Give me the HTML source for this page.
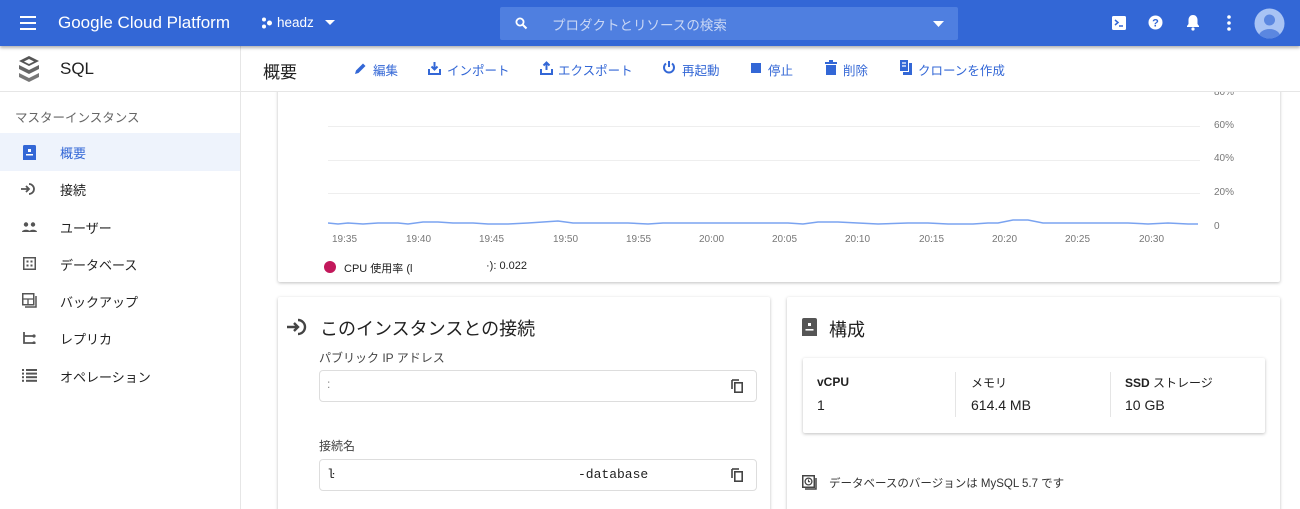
<!DOCTYPE html>
<html><head><meta charset="utf-8">
<style>
*{box-sizing:border-box;margin:0;padding:0}
html,body{width:1300px;height:509px;overflow:hidden}
body{background:#fff;font-family:"Liberation Sans","Noto Sans CJK JP",sans-serif;color:#212121;position:relative}
.a{position:absolute;white-space:nowrap}
.top{left:0;top:0;width:1300px;height:46px;background:#3367d6;box-shadow:0 2px 3px rgba(0,0,0,.3);z-index:3}
.w{color:#fff}
.card{background:#fff;box-shadow:0 1px 3px rgba(0,0,0,.25);border-radius:2px}
.nav{font-size:13px;color:#212121}
.btn{font-size:12.5px;color:#3367d6;top:60px}
.xl{font-size:10px;color:#777;top:234px}
.yl{font-size:10px;color:#777;left:1214px}
.grid{left:328px;width:872px;height:1px;background:#eee}
.field{border:1px solid #ddd;border-radius:4px;height:32px;width:438px;left:319px}
</style></head><body>
<div class="a top">
  <svg class="a" style="left:19px;top:14px" width="18" height="18" viewBox="0 0 18 18"><path d="M1 3h16M1 9h16M1 15h16" stroke="#fff" stroke-width="2"/></svg>
  <div class="a w" style="left:58px;top:13px;font-size:17px">Google Cloud Platform</div>
  <svg class="a" style="left:261px;top:17px" width="12" height="12"><circle cx="3" cy="2.5" r="2" fill="#fff"/><circle cx="3" cy="9.5" r="2" fill="#fff"/><circle cx="8.5" cy="6" r="2.5" fill="#fff"/></svg>
  <div class="a w" style="left:277px;top:15px;font-size:13.5px">headz</div>
  <svg class="a" style="left:325px;top:20px" width="10" height="6"><path d="M0 0h10L5 5z" fill="#fff"/></svg>
  <div class="a" style="left:500px;top:7px;width:458px;height:33px;background:#4f7fe0;border-radius:2px"></div>
  <svg class="a" style="left:515px;top:17px" width="13" height="13" viewBox="0 0 13 13"><circle cx="5" cy="5" r="3.6" stroke="#fff" stroke-width="1.8" fill="none"/><path d="M7.5 7.5l4 4" stroke="#fff" stroke-width="2"/></svg>
  <div class="a" style="left:552px;top:14px;font-size:13.5px;color:#c9d7f5">プロダクトとリソースの検索</div>
  <svg class="a" style="left:933px;top:21px" width="11" height="6"><path d="M0 0h11L5.5 6z" fill="#fff"/></svg>
  <svg class="a" style="left:1112px;top:16px" width="14" height="14"><rect width="14" height="14" rx="1.5" fill="#fff"/><path d="M3 4l3 2.5L3 9M7 10h4" stroke="#3367d6" stroke-width="1.5" fill="none"/></svg>
  <svg class="a" style="left:1148px;top:15px" width="15" height="15"><circle cx="7.5" cy="7.5" r="7" fill="#fff"/><text x="7.5" y="11.5" font-size="11" font-weight="bold" text-anchor="middle" fill="#3367d6" font-family="Liberation Sans">?</text></svg>
  <svg class="a" style="left:1186px;top:14px" width="14" height="17"><path d="M7 1c-3 0-4.5 2.5-4.5 5v4L1 12v1h12v-1l-1.5-2V6C11.5 3.5 10 1 7 1z" fill="#fff"/><circle cx="7" cy="15" r="1.6" fill="#fff"/></svg>
  <svg class="a" style="left:1227px;top:15px" width="4" height="16"><circle cx="2" cy="2" r="1.8" fill="#fff"/><circle cx="2" cy="8" r="1.8" fill="#fff"/><circle cx="2" cy="14" r="1.8" fill="#fff"/></svg>
  <svg class="a" style="left:1254px;top:8px" width="31" height="31"><defs><clipPath id="c"><circle cx="15.5" cy="15.5" r="15"/></clipPath></defs><circle cx="15.5" cy="15.5" r="15" fill="#a8c3f4"/><g clip-path="url(#c)" fill="#5b87e0"><circle cx="15.5" cy="12" r="5.5"/><ellipse cx="15.5" cy="29" rx="11" ry="8"/></g></svg>
</div>
<!-- second header -->
<div class="a" style="left:0;top:46px;width:1300px;height:46px;border-bottom:1px solid #e6e6e6;background:#fff;z-index:2"></div>
<div class="a" style="left:240px;top:46px;width:1px;height:463px;background:#e6e6e6;z-index:2"></div>
<svg class="a" style="left:17px;top:55px;z-index:2" width="24" height="27" viewBox="0 0 24 27"><path d="M12 1l10 5-10 5L2 6z" fill="#555"/><path d="M2 10l10 5 10-5v4l-10 5-10-5z" fill="#666"/><path d="M2 18l10 5 10-5v4l-10 5-10-5z" fill="#777"/><path d="M12 4l5 2.5-5 2.5-5-2.5z" fill="#fff"/></svg>
<div class="a" style="left:60px;top:59px;font-size:17px;z-index:2">SQL</div>
<div class="a" style="left:263px;top:58px;font-size:17px;z-index:2">概要</div>
<svg class="a" style="left:354px;top:62px;z-index:2" width="13" height="13"><path d="M1 12l1-3.5 7-7 2.5 2.5-7 7z" fill="#3367d6"/></svg><div class="a btn" style="left:373px;z-index:2">編集</div>
<svg class="a" style="left:428px;top:61px;z-index:2" width="13" height="14"><path d="M6.5 1v7M3.5 5.5l3 3 3-3" stroke="#3367d6" stroke-width="2" fill="none"/><path d="M1 8v5h11V8" stroke="#3367d6" stroke-width="2" fill="none"/></svg><div class="a btn" style="left:447px;z-index:2">インポート</div>
<svg class="a" style="left:540px;top:61px;z-index:2" width="13" height="14"><path d="M6.5 9V2M3.5 4.5l3-3 3 3" stroke="#3367d6" stroke-width="2" fill="none"/><path d="M1 8v5h11V8" stroke="#3367d6" stroke-width="2" fill="none"/></svg><div class="a btn" style="left:558px;z-index:2">エクスポート</div>
<svg class="a" style="left:662px;top:60px;z-index:2" width="14" height="15"><path d="M7 1v6" stroke="#3367d6" stroke-width="2"/><path d="M4 3.5a5 5 0 1 0 6 0" stroke="#3367d6" stroke-width="2" fill="none"/></svg><div class="a btn" style="left:682px;z-index:2">再起動</div>
<div class="a" style="left:751px;top:63px;width:10px;height:10px;background:#3367d6;z-index:2"></div><div class="a btn" style="left:768px;z-index:2">停止</div>
<svg class="a" style="left:825px;top:60px;z-index:2" width="12" height="15"><path d="M0 2h12v2H0zM4 0h4v2H4zM1 5h10v10H1z" fill="#3367d6"/></svg><div class="a btn" style="left:843px;z-index:2">削除</div>
<svg class="a" style="left:899px;top:60px;z-index:2" width="14" height="16"><path d="M1 0h8v11H1z" fill="#3367d6"/><path d="M10 3h3v12H4v-3h6z" fill="#3367d6"/><path d="M3 3h4M3 6h4" stroke="#fff" stroke-width="1.3"/></svg><div class="a btn" style="left:918px;z-index:2">クローンを作成</div>
<!-- sidebar -->
<div class="a" style="left:15px;top:107px;font-size:12.5px;color:#666">マスターインスタンス</div>
<div class="a" style="left:0;top:133px;width:240px;height:38px;background:#eef3fc"></div>
<svg class="a" style="left:23px;top:145px" width="13" height="15"><path d="M0 1.5a1.5 1.5 0 0 1 1.5-1.5h10A1.5 1.5 0 0 1 13 1.5V15H0z" fill="#3367d6"/><rect x="5" y="4" width="3" height="3" fill="#fff"/><rect x="3" y="9" width="7" height="1.5" fill="#fff"/></svg>
<div class="a nav" style="left:60px;top:143px;color:#3367d6">概要</div>
<svg class="a" style="left:21px;top:182px" width="17" height="14"><path d="M0 7h8M5 4l3 3-3 3" stroke="#555" stroke-width="1.8" fill="none"/><path d="M8 2a5 5 0 1 1 0 10" stroke="#555" stroke-width="1.8" fill="none"/></svg>
<div class="a nav" style="left:60px;top:180px">接続</div>
<svg class="a" style="left:22px;top:222px" width="15" height="11"><circle cx="4" cy="2.5" r="2.2" fill="#555"/><circle cx="11" cy="2.5" r="2.2" fill="#555"/><path d="M0 10c0-3 8-3 8 0zM7 10c0-3 8-3 8 0z" fill="#555"/></svg>
<div class="a nav" style="left:60px;top:218px">ユーザー</div>
<svg class="a" style="left:23px;top:257px" width="13" height="13"><rect x=".75" y=".75" width="11.5" height="11.5" stroke="#555" stroke-width="1.5" fill="none"/><rect x="3.5" y="3.5" width="2" height="2" fill="#555"/><rect x="7.5" y="3.5" width="2" height="2" fill="#555"/><rect x="3.5" y="7.5" width="2" height="2" fill="#555"/><rect x="7.5" y="7.5" width="2" height="2" fill="#555"/></svg>
<div class="a nav" style="left:60px;top:255px">データベース</div>
<svg class="a" style="left:22px;top:293px" width="15" height="15"><rect x=".75" y=".75" width="11" height="11" stroke="#555" stroke-width="1.5" fill="none"/><path d="M1 6h11M6 6v6" stroke="#555" stroke-width="1.3"/><path d="M14 3v11H3" stroke="#555" stroke-width="1.5" fill="none"/></svg>
<div class="a nav" style="left:60px;top:292px">バックアップ</div>
<svg class="a" style="left:23px;top:332px" width="13" height="12"><path d="M1 0v11h11M1 4h9" stroke="#555" stroke-width="1.8" fill="none"/><circle cx="11" cy="4" r="1.6" fill="#555"/><circle cx="11" cy="11" r="1.6" fill="#555"/></svg>
<div class="a nav" style="left:60px;top:329px">レプリカ</div>
<svg class="a" style="left:22px;top:369px" width="15" height="13"><g fill="#555"><rect y="0" width="2" height="2"/><rect y="3.6" width="2" height="2"/><rect y="7.2" width="2" height="2"/><rect y="10.8" width="2" height="2"/><rect x="4" y="0" width="11" height="2"/><rect x="4" y="3.6" width="11" height="2"/><rect x="4" y="7.2" width="11" height="2"/><rect x="4" y="10.8" width="11" height="2"/></g></svg>
<div class="a nav" style="left:60px;top:367px">オペレーション</div>
<!-- chart card -->
<div class="a card" style="left:278px;top:80px;width:1002px;height:202px"></div>
<div class="a yl" style="top:87px">80%</div>
<div class="grid a" style="top:126px"></div><div class="a yl" style="top:120px">60%</div>
<div class="grid a" style="top:160px"></div><div class="a yl" style="top:153px">40%</div>
<div class="grid a" style="top:193px"></div><div class="a yl" style="top:187px">20%</div>
<div class="a yl" style="top:221px">0</div>
<svg class="a" style="left:328px;top:215px" width="872" height="15"><path d="M0 8 L10 9 L20 8 L35 9 L50 8 L70 8 L80 9 L95 7 L110 7 L125 8 L145 8 L160 9 L180 9 L200 8 L215 7 L230 6 L245 8 L270 8 L300 8 L320 9 L335 8 L375 8 L400 8 L420 8 L440 8 L460 8 L475 9 L490 7 L510 7 L530 8 L550 9 L580 8 L600 8 L620 9 L645 9 L660 8 L670 8 L685 5 L700 5 L715 8 L750 8 L790 8 L800 8 L820 9 L840 8 L860 9 L870 9" stroke="#7aa3f0" stroke-width="1.5" fill="none"/></svg>
<div class="a xl" style="left:332px">19:35</div><div class="a xl" style="left:406px">19:40</div><div class="a xl" style="left:479px">19:45</div><div class="a xl" style="left:553px">19:50</div><div class="a xl" style="left:626px">19:55</div><div class="a xl" style="left:699px">20:00</div><div class="a xl" style="left:772px">20:05</div><div class="a xl" style="left:845px">20:10</div><div class="a xl" style="left:919px">20:15</div><div class="a xl" style="left:992px">20:20</div><div class="a xl" style="left:1065px">20:25</div><div class="a xl" style="left:1139px">20:30</div>
<div class="a" style="left:324px;top:261px;width:12px;height:12px;border-radius:50%;background:#c2185b"></div>
<div class="a" style="left:344px;top:260px;font-size:11px">CPU 使用率 (l</div>
<div class="a" style="left:486px;top:260px;font-size:11px">·): 0.022</div>
<!-- connect card -->
<div class="a card" style="left:278px;top:297px;width:492px;height:230px"></div>
<svg class="a" style="left:287px;top:317px" width="24" height="20"><path d="M0 10h11M7 6l4 4-4 4" stroke="#444" stroke-width="2.4" fill="none"/><path d="M11 3a7 7 0 1 1 0 14" stroke="#444" stroke-width="2.4" fill="none"/></svg>
<div class="a" style="left:320px;top:315px;font-size:18px">このインスタンスとの接続</div>
<div class="a" style="left:319px;top:349px;font-size:12px;color:#444">パブリック IP アドレス</div>
<div class="a field" style="top:370px"></div>
<div class="a" style="left:327px;top:377px;font-size:12px;color:#888">:</div>
<svg class="a" style="left:731px;top:379px" width="12" height="14"><path d="M1 1v9" stroke="#444" stroke-width="1.6"/><path d="M1 1h7" stroke="#444" stroke-width="1.6"/><rect x="3.8" y="3.8" width="7.4" height="9.4" stroke="#444" stroke-width="1.6" fill="none"/></svg>
<div class="a" style="left:319px;top:437px;font-size:12px;color:#444">接続名</div>
<div class="a field" style="top:459px"></div>
<div class="a" style="left:327px;top:467px;font-size:13px;font-family:'Liberation Mono',monospace">ŀ</div>
<div class="a" style="left:578px;top:467px;font-size:13px;font-family:'Liberation Mono',monospace">-database</div>
<svg class="a" style="left:731px;top:468px" width="12" height="14"><path d="M1 1v9" stroke="#444" stroke-width="1.6"/><path d="M1 1h7" stroke="#444" stroke-width="1.6"/><rect x="3.8" y="3.8" width="7.4" height="9.4" stroke="#444" stroke-width="1.6" fill="none"/></svg>
<!-- config card -->
<div class="a card" style="left:787px;top:297px;width:493px;height:230px"></div>
<svg class="a" style="left:802px;top:318px" width="15" height="18"><path d="M0 2a2 2 0 0 1 2-2h11a2 2 0 0 1 2 2v16H0z" fill="#555"/><rect x="6" y="5" width="3" height="3" fill="#fff"/><rect x="3.5" y="11" width="8" height="1.6" fill="#fff"/></svg>
<div class="a" style="left:829px;top:316px;font-size:18px">構成</div>
<div class="a card" style="left:803px;top:358px;width:462px;height:75px"></div>
<div class="a" style="left:955px;top:372px;width:1px;height:45px;background:#e5e5e5"></div>
<div class="a" style="left:1110px;top:372px;width:1px;height:45px;background:#e5e5e5"></div>
<div class="a" style="left:817px;top:375px;font-size:12px;font-weight:bold">vCPU</div>
<div class="a" style="left:817px;top:397px;font-size:14px">1</div>
<div class="a" style="left:971px;top:374px;font-size:12px">メモリ</div>
<div class="a" style="left:971px;top:397px;font-size:14px">614.4 MB</div>
<div class="a" style="left:1125px;top:374px;font-size:12px"><b>SSD</b> ストレージ</div>
<div class="a" style="left:1125px;top:397px;font-size:14px">10 GB</div>
<svg class="a" style="left:802px;top:475px" width="15" height="15"><rect x=".75" y=".75" width="11.5" height="11.5" stroke="#444" stroke-width="1.5" fill="#fff"/><circle cx="6.5" cy="6.5" r="3.4" stroke="#444" stroke-width="1.3" fill="none"/><path d="M6.5 4.5v2.2h1.6" stroke="#444" stroke-width="1.1" fill="none"/><path d="M14 3v11H3" stroke="#444" stroke-width="1.5" fill="none"/></svg>
<div class="a" style="left:829px;top:475px;font-size:11.5px;color:#333">データベースのバージョンは MySQL 5.7 です</div>
</body></html>
